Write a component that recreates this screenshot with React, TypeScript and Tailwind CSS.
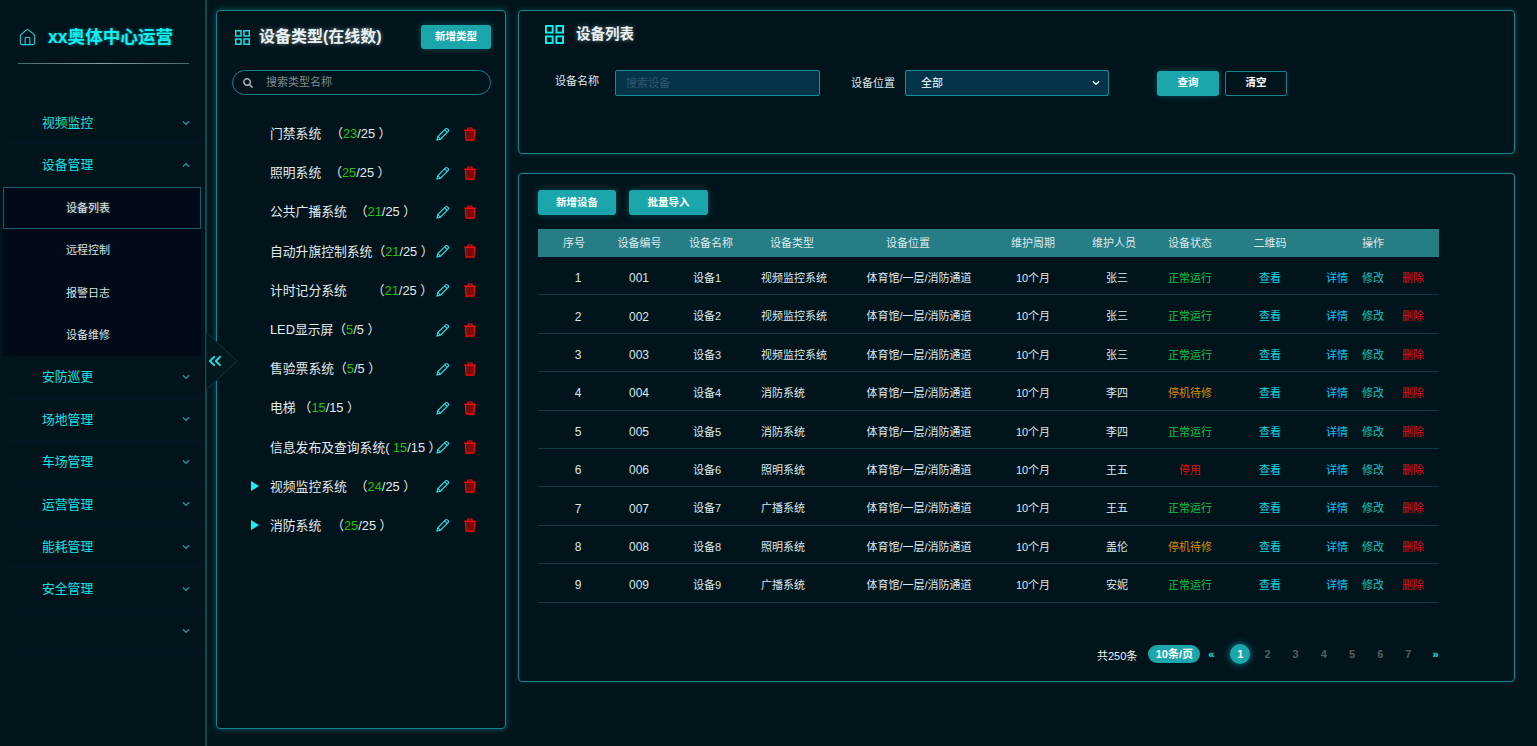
import { ChevronsLeft, House } from "lucide-react";
import { FaChevronDown, FaChevronUp, FaSearch } from "react-icons/fa";

const menuTop = ["视频监控", "设备管理"];
const menuSub = ["设备列表", "远程控制", "报警日志", "设备维修"];
const menuBottom = ["安防巡更", "场地管理", "车场管理", "运营管理", "能耗管理", "安全管理", ""];

const types = [
  { name: "门禁系统", gap: "ml-[9px]", on: 23, total: 25 },
  { name: "照明系统", gap: "ml-[8px]", on: 25, total: 25 },
  { name: "公共广播系统", gap: "ml-[8px]", on: 21, total: 25 },
  { name: "自动升旗控制系统", gap: "ml-0", on: 21, total: 25 },
  { name: "计时记分系统", gap: "ml-[25px]", on: 21, total: 25 },
  { name: "LED显示屏", gap: "ml-0", on: 5, total: 5 },
  { name: "售验票系统", gap: "ml-0", on: 5, total: 5 },
  { name: "电梯", gap: "ml-[3px]", on: 15, total: 15 },
  { name: "信息发布及查询系统", gap: "ml-0", on: 15, total: 15, tight: true },
  { name: "视频监控系统", gap: "ml-[8px]", on: 24, total: 25, arrow: true },
  { name: "消防系统", gap: "ml-[10px]", on: 25, total: 25, arrow: true },
];

const devices = [
  ["1", "001", "设备1", "视频监控系统", "张三", "正常运行"],
  ["2", "002", "设备2", "视频监控系统", "张三", "正常运行"],
  ["3", "003", "设备3", "视频监控系统", "张三", "正常运行"],
  ["4", "004", "设备4", "消防系统", "李四", "停机待修"],
  ["5", "005", "设备5", "消防系统", "李四", "正常运行"],
  ["6", "006", "设备6", "照明系统", "王五", "停用"],
  ["7", "007", "设备7", "广播系统", "王五", "正常运行"],
  ["8", "008", "设备8", "照明系统", "盖伦", "停机待修"],
  ["9", "009", "设备9", "广播系统", "安妮", "正常运行"],
];

const headers = ["序号", "设备编号", "设备名称", "设备类型", "设备位置", "维护周期", "维护人员", "设备状态", "二维码", "操作"];

const statusColor: Record<string, string> = {
  正常运行: "text-[#0fc24a]",
  停机待修: "text-[#d98a10]",
  停用: "text-[#e01010]",
};

function GridIcon({ className }: { className: string }) {
  return (
    <svg viewBox="0 0 20 20" fill="none" stroke="currentColor" strokeWidth="2" className={className}>
      <rect x="1" y="1" width="7" height="7" />
      <rect x="12" y="1" width="7" height="7" />
      <rect x="1" y="12" width="7" height="7" />
      <rect x="12" y="12" width="7" height="7" />
    </svg>
  );
}

function EditIcon() {
  return (
    <svg viewBox="0 0 14 14" fill="none" stroke="#1fe6ea" strokeWidth="1.1" className="h-[14px] w-[14px]">
      <path d="M1 13l.8-3.4L9.6 1.8a1.2 1.2 0 0 1 1.7 0l.9.9a1.2 1.2 0 0 1 0 1.7L4.4 12.2z" />
      <path d="M8.6 2.8l2.6 2.6M1.8 9.6l2.6 2.6" />
    </svg>
  );
}

function TrashIcon() {
  return (
    <svg viewBox="0 0 14 14" className="h-[14px] w-[14px]">
      <path d="M2.4 3.5h9.2l-.6 9.6H3z" fill="#7a0a0a" stroke="#ff0a0a" strokeWidth="1.1" />
      <path d="M1 3h12M5 3V1h4v2" fill="none" stroke="#ff0a0a" strokeWidth="1.1" />
    </svg>
  );
}

function MenuRow({ label, open }: { label: string; open?: boolean }) {
  return (
    <div className="flex h-[42.4px] items-center justify-between border-b border-[#021627] pl-[39px] pr-[11px] text-[12.8px] text-[#12e2e2]">
      <span>{label}</span>
      {open ? <FaChevronUp className="h-[8px] w-[8px] text-[#2c98a0]" /> : <FaChevronDown className="h-[8px] w-[8px] text-[#2c98a0]" />}
    </div>
  );
}

function TealButton({ label, className }: { label: string; className: string }) {
  return (
    <button className={`flex items-center justify-center rounded-[3px] bg-[#1aa6aa] text-[10.5px] font-bold text-white shadow-[0_0_6px_rgba(40,190,195,0.35)] ${className}`}>
      {label}
    </button>
  );
}

function Cell({ children, className = "justify-center" }: { children: React.ReactNode; className?: string }) {
  return <div className={`flex whitespace-nowrap ${className}`}>{children}</div>;
}

export default function App() {
  return (
    <div className="relative flex h-[746px] w-[1537px] overflow-hidden bg-[#02151c] text-white [font-family:'Liberation_Sans','Noto_Sans_CJK_SC',sans-serif]">
      {/* Sidebar */}
      <aside className="w-[207px] shrink-0 border-r-2 border-[#0b4b52] bg-[#02131b]">
        <div className="flex h-[63px] items-center pl-[18px] pt-[12px]">
          <House className="h-[19px] w-[19px] text-[#18d8dc]" strokeWidth={1.3} />
          <span className="ml-[11px] text-[17.6px] font-bold text-[#0ff0f0] [text-shadow:0_0_3px_rgba(0,240,240,0.5)]">xx奥体中心运营</span>
        </div>
        <div className="mx-[18px] h-px w-[171px] bg-gradient-to-r from-[#3a6a70] via-[#8a9ea2] to-[#3a6a70]" />
        <nav className="ml-[3px] mr-[4px] mt-[38px]">
          <MenuRow label={menuTop[0]} />
          <MenuRow label={menuTop[1]} open />
          <div className="bg-[#000b17]">
            {menuSub.map((item, i) => (
              <div
                key={item}
                className={`flex h-[42.4px] items-center text-[11px] text-[#d8e2e4] ${i === 0 ? "border border-[#145f69] pl-[62px] [text-shadow:0_0_3px_rgba(255,255,255,0.4)]" : "pl-[63px]"}`}
              >
                {item}
              </div>
            ))}
          </div>
          {menuBottom.map((item, i) => (
            <MenuRow key={i} label={item} />
          ))}
        </nav>
      </aside>

      {/* Collapse handle */}
      <div className="absolute left-[206px] top-[332px] h-[58px] w-[32px]">
        <svg viewBox="0 0 32 58" className="absolute inset-0 h-full w-full">
          <polygon points="0,0 31,29 0,58" fill="#03171e" stroke="#0c3c44" strokeWidth="1" />
        </svg>
        <ChevronsLeft className="absolute -left-[1px] top-[19px] h-[20px] w-[20px] text-[#1ae6ea]" strokeWidth={2.2} />
      </div>

      {/* Device types */}
      <section className="ml-[9px] mt-[10px] h-[719px] w-[290px] shrink-0 rounded-[4px] border border-[#11858b] bg-[#01141c] shadow-[0_0_6px_rgba(20,150,160,0.55)]">
        <div className="flex h-[38px] items-center justify-between pl-[18px] pr-[14px] pt-[14px]">
          <div className="flex items-center">
            <GridIcon className="h-[15px] w-[15px] text-[#18dfe2]" />
            <span className="ml-[9px] text-[16px] font-bold text-[#e8f0f2] [text-shadow:0_0_4px_rgba(255,255,255,0.45)]">设备类型(在线数)</span>
          </div>
          <TealButton label="新增类型" className="h-[24px] w-[70px]" />
        </div>
        <div className="mx-[15px] mt-[21px] flex h-[25px] w-[259px] items-center rounded-full border border-[#16808c] pl-[10px] text-[11px] text-[#808a8e]">
          <FaSearch className="h-[10px] w-[10px] text-[#a8b0b2]" />
          <span className="ml-[13px]">搜索类型名称</span>
        </div>
        <ul className="mt-[19px]">
          {types.map((t) => (
            <li key={t.name} className="flex h-[39.2px] items-center pr-[28px] text-[12.8px] text-[#e4eaec]">
              <span className="flex w-[53px] shrink-0 justify-end">
                {t.arrow ? (
                  <svg viewBox="0 0 8 10" className="mr-[11px] h-[10px] w-[8px]">
                    <polygon points="0,0 8,5 0,10" fill="#14f0f4" />
                  </svg>
                ) : null}
              </span>
              <span className="min-w-0 flex-1 whitespace-pre">
                {t.name}
                <span className={`inline-block ${t.gap}`}>{t.tight ? "( " : "（"}</span>
                <span className="text-[#22c30e]">{t.on}</span>/{t.total} ）
              </span>
              <span className="flex items-center gap-[13px]">
                <EditIcon />
                <TrashIcon />
              </span>
            </li>
          ))}
        </ul>
      </section>

      <main className="ml-[12px] mt-[10px] w-[997px] shrink-0">
        {/* Filter */}
        <section className="h-[144px] rounded-[4px] border border-[#11858b] bg-[#01141c] shadow-[0_0_5px_rgba(20,150,160,0.35)]">
          <div className="flex items-center pl-[26px] pt-[13px]">
            <GridIcon className="h-[19px] w-[19px] text-[#0ff0f0]" />
            <span className="ml-[12px] text-[14.5px] font-bold text-[#e8f0f2] [text-shadow:0_0_4px_rgba(255,255,255,0.45)]">设备列表</span>
          </div>
          <div className="mt-[24px] flex items-center text-[11px] text-[#dfe6e8]">
            <span className="ml-[36px] pb-[4px]">设备名称</span>
            <div className="ml-[16px] flex h-[26px] w-[205px] items-center rounded-[2px] border border-[#118f96] bg-[#03344a] pl-[10px] text-[#33566e]">搜索设备</div>
            <span className="ml-[31px]">设备位置</span>
            <div className="ml-[10px] flex h-[26px] w-[204px] items-center justify-between rounded-[2px] border border-[#118f96] bg-[#03344a] pl-[15px] pr-[8px] text-white">
              全部
              <FaChevronDown className="h-[8px] w-[8px] text-white" />
            </div>
            <TealButton label="查询" className="ml-[48px] mt-[1px] h-[25px] w-[62px]" />
            <button className="ml-[6px] mt-[1px] h-[25px] w-[62px] rounded-[2px] border border-[#11858b] text-[10.5px] font-bold text-white">清空</button>
          </div>
        </section>

        {/* Device table */}
        <section className="mt-[19px] h-[509px] rounded-[4px] border border-[#11858b] bg-[#01141c] pl-[19px] pt-[16px] shadow-[0_0_3px_rgba(20,150,160,0.3)]">
          <div className="flex gap-[13px]">
            <TealButton label="新增设备" className="h-[25px] w-[78px]" />
            <TealButton label="批量导入" className="h-[25px] w-[79px]" />
          </div>
          <div className="mt-[14px] w-[901px] text-[11px]">
            <div className="grid h-[28px] grid-cols-[72px_59px_84px_78px_154px_96px_66px_86px_74px_132px] items-center bg-[#277d85] text-[#dce8ea]">
              {headers.map((h) => (
                <Cell key={h}>{h}</Cell>
              ))}
            </div>
            {devices.map((d) => (
              <div
                key={d[0]}
                className="grid h-[38.4px] grid-cols-[80px_42px_94px_82px_166px_62px_106px_40px_120px_1fr] items-center border-b border-[#0b3a42] pt-[5px] text-[#dfe7e9]"
              >
                <Cell className="justify-center text-[12px]">{d[0]}</Cell>
                <Cell className="justify-center text-[12px]">{d[1]}</Cell>
                <Cell>{d[2]}</Cell>
                <Cell className="pl-[7px]">{d[3]}</Cell>
                <Cell>体育馆/一层/消防通道</Cell>
                <Cell>10个月</Cell>
                <Cell>{d[4]}</Cell>
                <Cell className={`justify-center ${statusColor[d[5]]}`}>{d[5]}</Cell>
                <Cell className="justify-center text-[#10d8e0]">查看</Cell>
                <div className="-ml-[4px] flex whitespace-nowrap">
                  <span className="text-[#12c4ee]">详情</span>
                  <span className="ml-[14px] text-[#10c4c0]">修改</span>
                  <span className="ml-[18px] text-[#e00c14]">删除</span>
                </div>
              </div>
            ))}
          </div>
          <div className="mt-[41px] flex items-center pl-[559px] text-[11px]">
            <span className="pt-[4px] text-[#eef4f5]">共250条</span>
            <span className="ml-[11px] flex h-[18px] w-[52px] items-center justify-center rounded-full bg-[#1aa6aa] font-bold">10条/页</span>
            <span className="ml-[8px] w-[8px] font-bold text-[#12e4ea]">«</span>
            <span className="ml-[14px] flex h-[20px] w-[20px] items-center justify-center rounded-full bg-[#1aa6aa] font-bold shadow-[0_0_7px_rgba(30,200,205,0.7)]">1</span>
            <div className="ml-[3px] flex font-bold text-[#565e60]">
              {[2, 3, 4, 5, 6, 7].map((n) => (
                <span key={n} className="flex w-[28.2px] justify-center">{n}</span>
              ))}
            </div>
            <span className="ml-[10px] font-bold text-[#12e4ea]">»</span>
          </div>
        </section>
      </main>
    </div>
  );
}
